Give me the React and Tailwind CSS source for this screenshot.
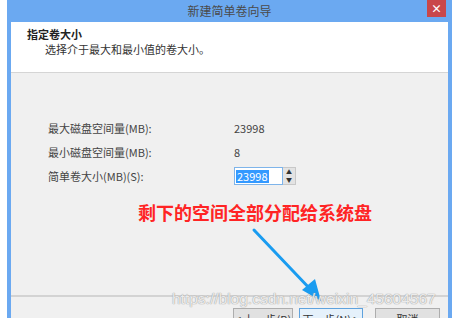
export default function App() {
  const font = { fontFamily: '"Noto Sans CJK SC", "Liberation Sans", sans-serif' }

  return (
    <div className="relative w-[453px] h-[318px] overflow-hidden bg-white" style={font}>
      <div className="ml-[7px] w-[445px] h-[318px] overflow-hidden bg-[#6ba9f1] flex flex-col">
        {/* Title bar */}
        <div className="relative shrink-0 h-[22px] flex items-center justify-center">
          <span className="text-[12px] text-[#4a4a4a] leading-none">新建简单卷向导</span>
          <div className="absolute right-[6px] top-0 w-[19px] h-[17px] bg-[#c9474a] flex items-center justify-center text-white text-[11px] font-bold leading-none">
            ×
          </div>
        </div>

        <div className="mx-[4px] shrink-0 h-[296px] flex flex-col bg-[#f0f0f0]">
          {/* Header */}
          <div className="shrink-0 h-[51px] bg-white border-b border-[#d5d5d5] pl-[16px] pt-[5px]">
            <div className="text-[11px] font-bold text-[#222] leading-[14px]">指定卷大小</div>
            <div className="text-[11px] text-[#333] leading-[14px] pl-[18px] mt-[1px]">选择介于最大和最小值的卷大小。</div>
          </div>

          {/* Body */}
          <div className="shrink-0 h-[222px] pt-[46px] pl-[37px]">
            <div className="flex flex-col gap-[6px] text-[11px] text-[#444]">
              <div className="flex items-center h-[18px]">
                <span className="w-[186px]">最大磁盘空间量(MB):</span>
                <span>23998</span>
              </div>
              <div className="flex items-center h-[18px]">
                <span className="w-[186px]">最小磁盘空间量(MB):</span>
                <span>8</span>
              </div>
              <div className="flex items-center h-[18px]">
                <span className="w-[186px]">简单卷大小(MB)(S):</span>
                <div className="flex items-center">
                  <div className="w-[49px] h-[18px] bg-white border border-[#7eb4ea] flex items-center px-[1px]">
                    <span className="bg-[#3399ff] text-white leading-[13px] px-[1px]">23998</span>
                  </div>
                  <div className="w-[13px] h-[18px] flex flex-col bg-[#e3e3e3] border border-[#c8c8c8] border-l-0">
                    <div className="flex-1 flex items-center justify-center text-[6px] leading-none text-[#333]">▲</div>
                    <div className="flex-1 flex items-center justify-center text-[6px] leading-none text-[#333]">▼</div>
                  </div>
                </div>
              </div>
            </div>
            <div className="mt-[16px] ml-[90px] text-[18px] font-bold text-[#ff2424] leading-[22px]">
              剩下的空间全部分配给系统盘
            </div>
          </div>

          {/* Footer */}
          <div className="shrink-0 h-[23px] border-t-2 border-[#d3d3d3] flex justify-end items-start pt-[11px] pr-[8px] gap-[6px]">
            <div className="shrink-0 w-[60px] h-[22px] bg-[#e1e1e1] border border-[#adadad] text-[11px] text-[#333] flex items-center justify-center">&lt; 上一步(B)</div>
            <div className="shrink-0 w-[64px] h-[22px] bg-[#e5f1fb] border border-[#5fa2dd] text-[11px] text-[#333] flex items-center justify-center mr-[6px]">下一步(N) &gt;</div>
            <div className="shrink-0 w-[65px] h-[22px] bg-[#e1e1e1] border border-[#adadad] text-[11px] text-[#333] flex items-center justify-center">取消</div>
          </div>
        </div>
      </div>

      {/* Annotation arrow */}
      <svg className="absolute left-0 top-0" width="453" height="318" viewBox="0 0 453 318">
        <line x1="254" y1="230" x2="312" y2="291" stroke="#1a9cf0" strokeWidth="3" strokeLinecap="round" />
        <polygon points="321,301 302,290 315,279" fill="#1a9cf0" />
      </svg>

      {/* Watermark */}
      <div
        className="absolute left-[172px] top-[291px] text-[15.5px] leading-none text-white/80"
        style={{ fontFamily: '"Liberation Sans", sans-serif', textShadow: '0 0 1px #9a9a9a, 0 0 1px #9a9a9a' }}
      >
        https://blog.csdn.net/weixin_45604567
      </div>
    </div>
  )
}
